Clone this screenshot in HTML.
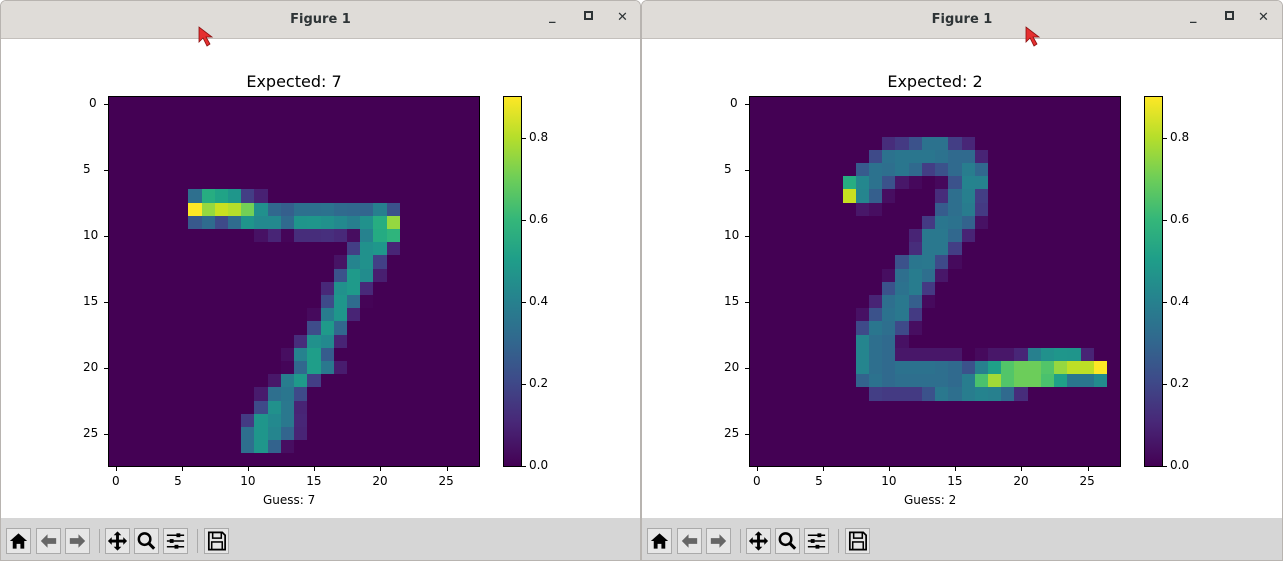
<!DOCTYPE html>
<html><head><meta charset="utf-8"><style>
*{margin:0;padding:0;box-sizing:border-box}
body{width:1283px;height:561px;background:#fff;position:relative;overflow:hidden;font-family:"DejaVu Sans","Liberation Sans",sans-serif;color:#000}
.win{position:absolute;top:0;width:641px;height:561px;border:1px solid #b8b4b0;background:#fff;border-radius:6px 6px 0 0;overflow:hidden}
.tb{position:absolute;left:0;top:0;right:0;height:38px;background:#dfdcd8;border-bottom:1px solid #c4c0bc}
.tt{position:absolute;top:11px;width:100%;text-align:center;font-size:13px;font-weight:bold;color:#2e3436}
.wb{position:absolute;top:10px;font-size:13px;font-weight:bold;color:#2e3436}
.tool{position:absolute;left:0;right:0;top:517px;height:44px;background:#d6d6d6}
.btn{position:absolute;top:10px;width:25px;height:26px;border:1px solid #aaa;background:#e6e6e6}
.sep{position:absolute;top:11px;width:1px;height:24px;background:#aaa}
.ax{position:absolute;background:#440154;border:1px solid #000}
.cell{position:absolute;width:13.3px;height:13.3px}
.lab{position:absolute;font-size:12px;white-space:nowrap}
.tk{position:absolute;background:#000}
.title{position:absolute;font-size:16px;width:400px;text-align:center}
.cb{position:absolute;border:1px solid #000;background:linear-gradient(to top,#440154 0%,#482878 12%,#3e4a89 23%,#31688e 34%,#26828e 45%,#1f9e89 56%,#35b779 67%,#6ece58 78%,#b5de2b 89%,#fde725 100%)}
</style></head><body>
<div id="root"></div>
<script>
const L={7:[[6,'2e6f8e'],[7,'27ad81'],[8,'20a386'],[9,'1f968b'],[10,'433e85'],[11,'482173']],
8:[[6,'fde725'],[7,'95d840'],[8,'c8e020'],[9,'b5de2b'],[10,'73d056'],[11,'21908d'],[12,'31688e'],[13,'355f8d'],[14,'2d708e'],[15,'2d708e'],[16,'2c728e'],[17,'306a8e'],[18,'31688e'],[19,'32658e'],[20,'277f8e'],[21,'3b528b']],
9:[[6,'38598c'],[7,'2f6b8e'],[8,'3e4a89'],[9,'2f6c8e'],[10,'1f958b'],[11,'23898e'],[12,'23898e'],[13,'306a8e'],[14,'1f958b'],[15,'1f968b'],[16,'21918c'],[17,'23898e'],[18,'277f8e'],[19,'21918c'],[20,'27ad81'],[21,'95d840']],
10:[[11,'471164'],[12,'482576'],[13,'450559'],[14,'472d7b'],[15,'472d7b'],[16,'472f7d'],[17,'482979'],[18,'470d60'],[19,'26828e'],[20,'25ab82'],[21,'2fb47c']],
11:[[18,'433e85'],[19,'21918c'],[20,'1f978b'],[21,'482576']],
12:[[17,'471365'],[18,'25848e'],[19,'21918c'],[20,'424086']],
13:[[17,'3b528b'],[18,'1f9a8a'],[19,'228c8d'],[20,'481f70']],
14:[[16,'482878'],[17,'21918c'],[18,'1f9a8a'],[19,'482979']],
15:[[16,'3e4a89'],[17,'1f968b'],[18,'2f6c8e'],[19,'450457']],
16:[[15,'460a5d'],[16,'287c8e'],[17,'1f968b'],[18,'482475']],
17:[[15,'3e4c8a'],[16,'1f9a8a'],[17,'31688e']],
18:[[14,'472d7b'],[15,'21918c'],[16,'23898e'],[17,'482475']],
19:[[13,'470e61'],[14,'26828e'],[15,'1f9e89'],[16,'365c8d']],
20:[[13,'450559'],[14,'31688e'],[15,'1f9e89'],[16,'2a788e'],[17,'481c6e']],
21:[[12,'481769'],[13,'287d8e'],[14,'1f9a8a'],[15,'433e85']],
22:[[11,'481b6d'],[12,'2e6f8e'],[13,'2a768e'],[14,'3e4a89']],
23:[[11,'3e4a89'],[12,'21918c'],[13,'2a788e'],[14,'482475']],
24:[[10,'443a83'],[11,'1f968b'],[12,'23898e'],[13,'2a788e'],[14,'482677']],
25:[[10,'2e6f8e'],[11,'1f968b'],[12,'25858e'],[13,'32658e'],[14,'482475']],
26:[[10,'2e6f8e'],[11,'1f968b'],[12,'33638d'],[13,'470e61']]};
const R={3:[[10,'472d7b'],[11,'443a83'],[12,'3b528b'],[13,'2c728e'],[14,'2c728e'],[15,'433e85'],[16,'482677']],
4:[[9,'3e4a89'],[10,'2c728e'],[11,'2a768e'],[12,'2a768e'],[13,'2a768e'],[14,'2c728e'],[15,'306a8e'],[16,'306a8e'],[17,'482475']],
5:[[8,'375b8d'],[9,'2c728e'],[10,'2e6f8e'],[11,'2a768e'],[12,'306a8e'],[13,'433e85'],[14,'3b528b'],[15,'306a8e'],[16,'287d8e'],[17,'31688e']],
6:[[7,'27ad81'],[8,'24878e'],[9,'2c728e'],[10,'3b528b'],[11,'481769'],[12,'46085c'],[14,'46085c'],[15,'3b528b'],[16,'25838e'],[17,'26828e']],
7:[[7,'c8e020'],[8,'25858e'],[9,'355f8d'],[10,'470e61'],[14,'472d7b'],[15,'2e6f8e'],[16,'277f8e'],[17,'433e85']],
8:[[8,'481769'],[9,'470e61'],[14,'365c8d'],[15,'2e6f8e'],[16,'287c8e'],[17,'443a83']],
9:[[13,'443a83'],[14,'2a768e'],[15,'2c728e'],[16,'33638d'],[17,'471164']],
10:[[12,'482475'],[13,'2a788e'],[14,'2a788e'],[15,'31688e'],[16,'482475']],
11:[[12,'472d7b'],[13,'2a788e'],[14,'2a788e'],[15,'433e85']],
12:[[11,'3b528b'],[12,'2a768e'],[13,'2a788e'],[14,'3e4a89'],[15,'460a5d']],
13:[[10,'470e61'],[11,'2e6f8e'],[12,'287c8e'],[13,'2e6f8e'],[14,'481769']],
14:[[10,'3b528b'],[11,'2c728e'],[12,'287c8e'],[13,'443a83']],
15:[[9,'482475'],[10,'2e6f8e'],[11,'2a788e'],[12,'355f8d'],[13,'460a5d']],
16:[[8,'471164'],[9,'3b528b'],[10,'2c728e'],[11,'2a788e'],[12,'443a83']],
17:[[8,'3e4a89'],[9,'2a768e'],[10,'2e6f8e'],[11,'3e4a89'],[12,'470e61']],
18:[[8,'25858e'],[9,'2e6f8e'],[10,'306a8e'],[11,'471164']],
19:[[8,'25858e'],[9,'2e6f8e'],[10,'306a8e'],[11,'481769'],[12,'481769'],[13,'481769'],[14,'481769'],[15,'481769'],[17,'460a5d'],[18,'481769'],[19,'481769'],[20,'482677'],[21,'27808e'],[22,'21918c'],[23,'1f968b'],[24,'1f958b'],[25,'482475']],
20:[[8,'25858e'],[9,'2e6f8e'],[10,'306a8e'],[11,'2c728e'],[12,'2c728e'],[13,'2c728e'],[14,'2e6f8e'],[15,'306a8e'],[16,'3b528b'],[17,'27808e'],[18,'1fa088'],[19,'52c569'],[20,'6ccd5a'],[21,'6ccd5a'],[22,'52c569'],[23,'95d840'],[24,'bddf26'],[25,'bddf26'],[26,'fde725']],
21:[[8,'33638d'],[9,'2c728e'],[10,'306a8e'],[11,'2e6f8e'],[12,'2e6f8e'],[13,'2e6f8e'],[14,'2e6f8e'],[15,'306a8e'],[16,'287d8e'],[17,'4ac16d'],[18,'a2da37'],[19,'52c569'],[20,'6ccd5a'],[21,'6ccd5a'],[22,'4ac16d'],[23,'1fa088'],[24,'2a768e'],[25,'2a768e'],[26,'238a8d']],
22:[[9,'433e85'],[10,'443a83'],[11,'443a83'],[12,'443a83'],[13,'3b528b'],[14,'2a788e'],[15,'2e6f8e'],[16,'287d8e'],[17,'25838e'],[18,'27808e'],[19,'306a8e'],[20,'472d7b']]};
const icons=[
'<path d="M12 4 L3 12 H6 V20 H10 V15 H14 V20 H18 V12 H21 Z" fill="#000"/>',
'<path d="M4 12 L11 5 V9 H20 V15 H11 V19 Z" fill="#666"/>',
'<path d="M20 12 L13 5 V9 H4 V15 H13 V19 Z" fill="#666"/>',
'<path d="M12 2 L16 6 H13.5 V10.5 H18 V8 L22 12 L18 16 V13.5 H13.5 V18 H16 L12 22 L8 18 H10.5 V13.5 H6 V16 L2 12 L6 8 V10.5 H10.5 V6 H8 Z" fill="#000"/>',
'<circle cx="10" cy="10" r="6" fill="none" stroke="#000" stroke-width="2.6"/><path d="M14 14 L20 20" stroke="#000" stroke-width="3.2"/>',
'<path d="M3 6H21M3 12H21M3 18H21" stroke="#000" stroke-width="1.6"/><rect x="13" y="4" width="4" height="4" fill="#000"/><rect x="6" y="10" width="4" height="4" fill="#000"/><rect x="11" y="16" width="4" height="4" fill="#000"/>',
'<path d="M4 3 H18 L21 6 V21 H4 Z" fill="none" stroke="#000" stroke-width="1.8"/><rect x="8" y="3" width="9" height="6" fill="none" stroke="#000" stroke-width="1.6"/><rect x="7" y="13" width="11" height="8" fill="none" stroke="#000" stroke-width="1.6"/>'];
const bx=[5,35,64,104,133,162,203];
let out='';
[[0,L,'7',198],[641,R,'2',1025]].forEach(([ox,D,n,cur])=>{
 let h=`<div class="win" style="left:${ox}px;${ox?'width:642px':''}"><div class="tb"><div class="tt">Figure 1</div>
 <div class="wb" style="left:548px;top:8px">_</div><div class="wb" style="left:583px;top:10px;width:9px;height:9px;border:2px solid #2e3436"></div><div class="wb" style="left:616px;top:9px">✕</div></div>`;
 h+=`<div class="title" style="left:93px;top:71px">Expected: ${n}</div>`;
 h+=`<div class="ax" style="left:107px;top:95px;width:372px;height:371px">`;
 for(const r in D)for(const [c,col] of D[r])h+=`<div class="cell" style="left:${c*13.22}px;top:${r*13.2}px;background:#${col}"></div>`;
 h+='</div>';
 for(let i=0;i<6;i++){const y=103+i*66;h+=`<div class="tk" style="left:103px;top:${y}px;width:4px;height:1px"></div><div class="lab" style="left:${i?82:88}px;top:${y-8}px">${i*5}</div>`;
  const x=115+i*66.1;h+=`<div class="tk" style="left:${x}px;top:466px;width:1px;height:4px"></div><div class="lab" style="left:${x-(i?8:4)}px;top:473px">${i*5}</div>`;}
 h+=`<div class="lab" style="left:262px;top:492px">Guess: ${n}</div>`;
 h+=`<div class="cb" style="left:502px;top:95px;width:19px;height:371px"></div>`;
 ['0.0','0.2','0.4','0.6','0.8'].forEach((t,i)=>{const y=465-i*82;h+=`<div class="tk" style="left:521px;top:${y}px;width:4px;height:1px"></div><div class="lab" style="left:528px;top:${y-8}px">${t}</div>`;});
 h+='<div class="tool">';
 bx.forEach((x,i)=>{h+=`<div class="btn" style="left:${x}px"><svg width="23" height="24" viewBox="0 0 24 24">${icons[i]}</svg></div>`});
 h+='<div class="sep" style="left:98px"></div><div class="sep" style="left:196px"></div></div></div>';
 h+=`<svg style="position:absolute;left:${cur}px;top:26px" width="20" height="26" viewBox="0 0 20 26"><path d="M1 1 L1 16 L5 12 L9 20 L12 18 L8 11 L14 11 Z" fill="#e53030" stroke="#8a1010" stroke-width="0.8"/></svg>`;
 out+=h;
});
document.getElementById('root').innerHTML=out;
</script>
</body></html>
